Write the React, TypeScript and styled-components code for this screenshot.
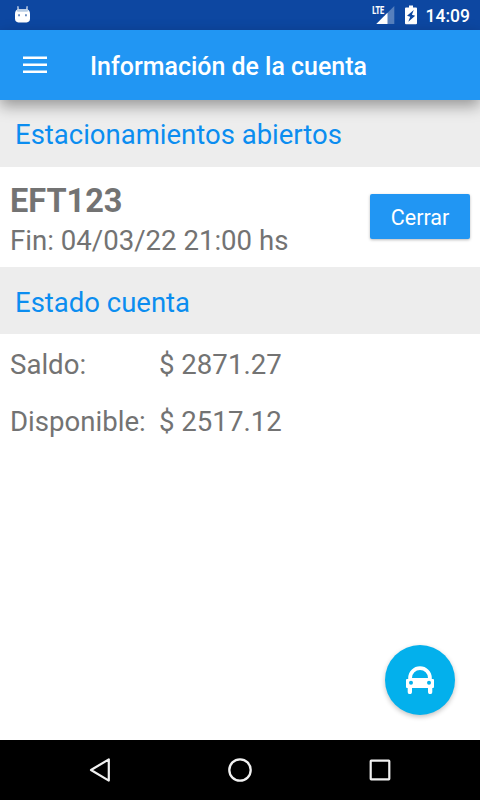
import React from "react";
import styled, { createGlobalStyle } from "styled-components";

const GlobalStyle = createGlobalStyle`
  * { box-sizing: border-box; }
  body { margin: 0; background: #fff; font-family: Roboto, sans-serif; }
`;

const Screen = styled.div`
  width: 480px;
  height: 800px;
  display: flex;
  flex-direction: column;
  overflow: hidden;
  background: #fff;
  color: #737373;
  font-size: 27.6px;
  white-space: nowrap;
`;

const StatusBar = styled.header`
  height: 30px;
  flex: none;
  display: flex;
  align-items: center;
  justify-content: space-between;
  padding: 0 10px 0 15px;
  background: #0d47a1;
  color: #fff;
`;

const StatusGroup = styled.div`
  display: flex;
  align-items: center;
`;

const BatterySlot = styled.span`
  display: flex;
  margin: 0 9px 0 10px;
`;

const Clock = styled.time`
  font-size: 17.5px;
  font-weight: 500;
  line-height: 30px;
  padding-top: 2px;
`;

const AppBar = styled.div`
  position: relative;
  z-index: 1;
  height: 70px;
  flex: none;
  display: flex;
  align-items: center;
  padding-left: 23px;
  background: #2196f3;
  box-shadow: 0 6px 14px rgba(0, 0, 0, 0.36);
`;

const MenuButton = styled.button`
  display: flex;
  border: 0;
  padding: 0;
  background: none;
`;

const Title = styled.h1`
  margin: 3px 0 0 43px;
  color: #fff;
  font-size: 24.95px;
  font-weight: 500;
  line-height: 30px;
`;

const Content = styled.main`
  flex: 1;
  display: flex;
  flex-direction: column;
`;

const SectionHeader = styled.h2<{ $lineHeight: number }>`
  margin: 0;
  height: 67px;
  padding: 2px 15px 0;
  background: #ededed;
  color: #0b8df0;
  font-size: 27.5px;
  font-weight: 400;
  line-height: ${({ $lineHeight }) => $lineHeight}px;
`;

const ParkingRow = styled.section`
  height: 100px;
  display: flex;
  justify-content: space-between;
  padding: 14px 10px 0;
`;

const Plate = styled.div`
  font-size: 32.5px;
  font-weight: 700;
  line-height: 40px;
`;

const EndTime = styled.div`
  line-height: 40px;
`;

const CloseButton = styled.button`
  width: 100px;
  height: 45px;
  margin-top: 13px;
  padding: 2px 0 0;
  border: 0;
  border-radius: 2px;
  background: #2196f3;
  color: #fff;
  font: 400 21.5px Roboto, sans-serif;
  box-shadow: 0 1px 3px rgba(0, 0, 0, 0.28);
`;

const Balances = styled.dl`
  margin: 0;
  padding: 2px 10px 0;
  display: grid;
  grid-template-columns: 149px 1fr;
  grid-auto-rows: 57px;
  line-height: 57px;
`;

const Label = styled.dt``;

const Amount = styled.dd`
  margin: 0;
`;

const Fab = styled.button`
  width: 70px;
  height: 70px;
  margin: auto 25px 25px auto;
  padding: 0;
  display: flex;
  align-items: center;
  justify-content: center;
  border: 0;
  border-radius: 50%;
  background: #03b0ec;
  box-shadow: 0 2px 5px rgba(0, 0, 0, 0.24);
`;

const NavBar = styled.nav`
  height: 60px;
  flex: none;
  display: flex;
  align-items: center;
  justify-content: space-between;
  padding: 0 86px;
  background: #000;
`;

const AndroidIcon = () => (
  <svg width="15" height="18" viewBox="0 0 15 18">
    <path d="M3.2 4.5 2.9.2M11.8 4.5 12.1.2" stroke="#d6e0ef" strokeWidth="1.3" />
    <path d="M0 8Q0 3.2 4 3.2H11Q15 3.2 15 8V12.6Q15 16.4 11.6 16.4H3.4Q0 16.4 0 12.6Z" fill="#fff" />
    <path d="M1.2 5Q2.2 3.2 4.3 3.2H10.7Q12.8 3.2 13.8 5L12 5.8H3Z" fill="#b9cde3" />
    <path d="M3.1 8.3h1.9v1.9H3.1zM10 8.3h1.9v1.9H10z" fill="#6b8dc1" />
  </svg>
);

const SignalIcon = () => (
  <svg width="23" height="20" viewBox="0 0 23 20">
    <path d="M22.3 1V19H4.3Z" fill="#567fbd" />
    <path d="M15.5 7.8V19H4.3Z" fill="#fff" />
    <path d="M0 0H12.8V10.3H0Z" fill="#0d47a1" />
    <text x="0.3" y="9" fill="#fff" stroke="#fff" strokeWidth=".2" fontSize="10.5" fontWeight="700" textLength="11.8" lengthAdjust="spacingAndGlyphs">LTE</text>
  </svg>
);

const BatteryIcon = () => (
  <svg width="12" height="20" viewBox="0 0 12 20">
    <path d="M4 .5H8V2.5H11Q12 2.5 12 3.5V18.2Q12 19.2 11 19.2H1Q0 19.2 0 18.2V3.5Q0 2.5 1 2.5H4Z" fill="#fff" />
    <path d="M8.8 5 2 10.8 5.2 11.8 3.3 16.8 10.2 10.8 6.9 9.8Z" fill="#0d47a1" />
  </svg>
);

const MenuIcon = () => (
  <svg width="24" height="18" viewBox="0 0 24 18">
    <path d="M0 1.7H24M0 8.8H24M0 15.8H24" stroke="#fff" strokeWidth="2.6" />
  </svg>
);

const CarIcon = () => (
  <svg width="28" height="28" viewBox="0 0 28 28">
    <path
      d="M1 13H2.2V12A11.8 11.8 0 0 1 25.8 12V13H27Q28 13 28 14V21Q28 22 27 22H26.3V26A2 2 0 0 1 22 26V22H6V26A2 2 0 0 1 1.7 26V22H1Q0 22 0 21V14Q0 13 1 13ZM6 12H22A8 8 0 0 0 6 12Z"
      fill="#fff"
    />
    <circle cx="5" cy="16.8" r="2" fill="#03b0ec" />
    <circle cx="23" cy="16.8" r="2" fill="#03b0ec" />
  </svg>
);

const BackIcon = () => (
  <svg width="28" height="28" viewBox="0 0 28 28">
    <path d="M22.8 3.4V24.6L5 14Z" fill="none" stroke="#f1f1f1" strokeWidth="2.2" strokeLinejoin="round" />
  </svg>
);

const HomeIcon = () => (
  <svg width="28" height="28" viewBox="0 0 28 28">
    <circle cx="14" cy="14" r="10.7" fill="none" stroke="#f1f1f1" strokeWidth="2.3" />
  </svg>
);

const RecentsIcon = () => (
  <svg width="28" height="28" viewBox="0 0 28 28">
    <rect x="4.7" y="4.7" width="18.6" height="18.6" rx=".5" fill="none" stroke="#f1f1f1" strokeWidth="2.2" strokeLinejoin="round" />
  </svg>
);

const balances = [
  { label: "Saldo:", amount: "$ 2871.27" },
  { label: "Disponible:", amount: "$ 2517.12" },
];

export default function App() {
  return (
    <Screen>
      <GlobalStyle />
      <StatusBar>
        <AndroidIcon />
        <StatusGroup>
          <SignalIcon />
          <BatterySlot><BatteryIcon /></BatterySlot>
          <Clock>14:09</Clock>
        </StatusGroup>
      </StatusBar>
      <AppBar>
        <MenuButton aria-label="Menú"><MenuIcon /></MenuButton>
        <Title>Información de la cuenta</Title>
      </AppBar>
      <Content>
        <SectionHeader $lineHeight={66}>Estacionamientos abiertos</SectionHeader>
        <ParkingRow>
          <div>
            <Plate>EFT123</Plate>
            <EndTime>Fin: 04/03/22 21:00 hs</EndTime>
          </div>
          <CloseButton>Cerrar</CloseButton>
        </ParkingRow>
        <SectionHeader $lineHeight={67}>Estado cuenta</SectionHeader>
        <Balances>
          {balances.map(({ label, amount }) => (
            <React.Fragment key={label}>
              <Label>{label}</Label>
              <Amount>{amount}</Amount>
            </React.Fragment>
          ))}
        </Balances>
        <Fab aria-label="Estacionar"><CarIcon /></Fab>
      </Content>
      <NavBar>
        <BackIcon />
        <HomeIcon />
        <RecentsIcon />
      </NavBar>
    </Screen>
  );
}
